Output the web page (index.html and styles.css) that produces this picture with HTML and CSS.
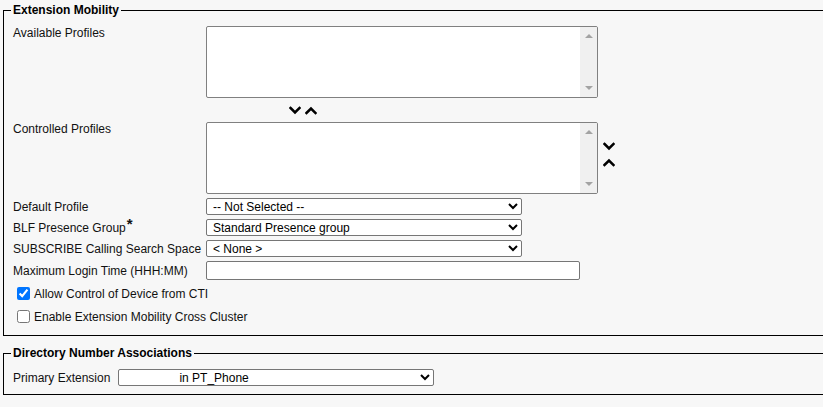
FILE: index.html
```html
<!DOCTYPE html>
<html lang="en">
<head>
  <meta charset="utf-8" />
  <title>Extension Mobility</title>
  <link rel="stylesheet" href="styles.css">
</head>
<body>
  <!-- Extension Mobility -->
  <fieldset class="group">
    <legend>Extension Mobility</legend>
    <div class="form-grid">
      <label class="lbl lbl-top">Available Profiles</label>
      <div class="listbox">
        <div class="list-body"></div>
        <div class="scroll"><span class="tri up"></span><span class="tri down"></span></div>
      </div>

      <span></span>
      <div class="move-row">
        <svg class="chev" viewBox="0 0 12 9" width="12" height="9"><path d="M1.5 2 L6 6.5 L10.5 2" /></svg>
        <svg class="chev" viewBox="0 0 12 9" width="12" height="9"><path d="M1.5 7 L6 2.5 L10.5 7" /></svg>
      </div>

      <label class="lbl lbl-top">Controlled Profiles</label>
      <div class="list-wrap">
        <div class="listbox">
          <div class="list-body"></div>
          <div class="scroll"><span class="tri up"></span><span class="tri down"></span></div>
        </div>
        <div class="side-moves">
          <svg class="chev" viewBox="0 0 12 9" width="12" height="9"><path d="M1.5 2 L6 6.5 L10.5 2" /></svg>
          <svg class="chev" viewBox="0 0 12 9" width="12" height="9"><path d="M1.5 7 L6 2.5 L10.5 7" /></svg>
        </div>
      </div>

      <label class="lbl">Default Profile</label>
      <select class="sel"><option>-- Not Selected --</option></select>

      <label class="lbl">BLF Presence Group<sup class="req">*</sup></label>
      <select class="sel"><option>Standard Presence group</option></select>

      <label class="lbl">SUBSCRIBE Calling Search Space</label>
      <select class="sel"><option>&lt; None &gt;</option></select>

      <label class="lbl">Maximum Login Time (HHH:MM)</label>
      <input class="txt" type="text" />
    </div>

    <div class="checks">
      <label class="check-row"><input type="checkbox" checked /> Allow Control of Device from CTI</label>
      <label class="check-row"><input type="checkbox" /> Enable Extension Mobility Cross Cluster</label>
    </div>
  </fieldset>

  <!-- Directory Number Associations -->
  <fieldset class="group group-dn">
    <legend>Directory Number Associations</legend>
    <div class="inline-row">
      <label class="lbl">Primary Extension</label>
      <select class="sel sel-dn"><option>in PT_Phone</option></select>
    </div>
  </fieldset>
</body>
</html>
```
FILE: styles.css
```css
*,*::before,*::after{box-sizing:border-box;}

html,body{overflow:hidden;}

body{
  margin:0;
  padding:3px 0 0 3px;
  background:#f7f7f7;
  color:#111;
  font-family:"Liberation Sans",Arial,sans-serif;
  font-size:12px;
  line-height:14px;
}

/* fieldsets run past the right edge of the window */
.group{
  width:880px;
  margin:0;
  border:1px solid #000;
  padding:9px 0 7px 7px;
}
.group legend{
  padding:0 2px;
  font-weight:bold;
  font-size:12px;
  line-height:14px;
  color:#000;
}
.group-dn{margin-top:10px;padding-bottom:8px;}

/* label / control grid */
.form-grid{
  display:grid;
  grid-template-columns:193px 1fr;
  padding-left:2px;
  align-items:center;
}
.lbl{white-space:nowrap;}
.lbl-top{align-self:start;}
.req{font-size:15px;line-height:0;vertical-align:3px;font-weight:bold;margin-left:1px;}

.listbox{
  width:392px;
  height:72px;
  display:grid;
  grid-template-columns:1fr 17px;
  border:1px solid #808080;
  border-radius:2px;
  background:#fff;
  overflow:hidden;
}
.scroll{
  background:#f0f0f0;
  display:flex;
  flex-direction:column;
  justify-content:space-between;
  align-items:center;
  padding:7px 0 7px;
}
.tri{width:0;height:0;border-left:4px solid transparent;border-right:4px solid transparent;}
.tri.up{border-bottom:4px solid #a3a3a3;}
.tri.down{border-top:4px solid #a3a3a3;}

.move-row{
  height:24px;
  display:flex;
  align-items:center;
  gap:4px;
  padding-left:83px;
}
.chev{display:block;}
.chev path{fill:none;stroke:#000;stroke-width:2.6;stroke-linecap:square;stroke-linejoin:miter;}

.list-wrap{display:flex;align-items:center;gap:5px;}
.side-moves{display:flex;flex-direction:column;gap:7px;margin-top:-8px;}

.sel{
  width:316px;
  height:17px;
  margin-top:4px;
  padding:0 2px;
  font-family:inherit;
  font-size:12px;
  color:#000;
  background:#fff;
  border:1px solid #767676;
  border-radius:2px;
}
.form-grid .lbl:nth-of-type(n+3){margin-top:4px;}
.txt{
  width:374px;
  height:19px;
  margin-top:4px;
  border:1px solid #767676;
  border-radius:2px;
  background:#fff;
}

.checks{padding-top:2px;}
.check-row{
  display:flex;
  align-items:center;
  height:23px;
  padding-left:6px;
  white-space:nowrap;
}
.check-row input{width:13px;height:13px;margin:0 4px 0 0;}

.inline-row{display:flex;align-items:center;gap:8px;padding-left:2px;}
.sel-dn{margin-top:0;padding-left:56px;}
```
